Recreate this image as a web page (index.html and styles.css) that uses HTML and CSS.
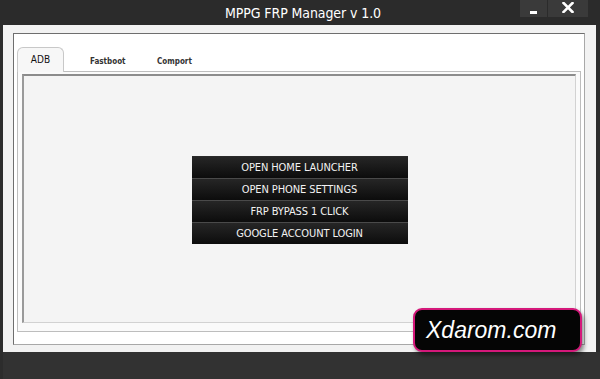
FILE: index.html
```html
<!DOCTYPE html>
<html lang="en">
<head>
  <meta charset="UTF-8" />
  <meta name="viewport" content="width=device-width, initial-scale=1.0"/>
  <title>MPPG FRP Manager v 1.0</title>
  <link rel="stylesheet" href="styles.css">
</head>
<body>

<div class="window">
  <div class="titlebar">
    <span></span>
    <div class="title">MPPG FRP Manager v 1.0</div>
    <div class="controls">
      <div class="ctl min"><span class="bar"></span></div>
      <div class="ctl close">
        <svg width="12" height="11" viewBox="0 0 12 11"><path d="M1.5 1 L10.5 10 M10.5 1 L1.5 10" stroke="#fff" stroke-width="2.6" stroke-linecap="square"/></svg>
      </div>
    </div>
  </div>

  <div class="body">
    <div class="group">
      <div class="tabs">
        <div class="tab active">ADB</div>
        <div class="tab">Fastboot</div>
        <div class="tab">Comport</div>
      </div>
      <div class="frame">
        <div class="page">
          <div class="menu">
            <button>OPEN HOME LAUNCHER</button>
            <button>OPEN PHONE SETTINGS</button>
            <button>FRP BYPASS 1 CLICK</button>
            <button>GOOGLE ACCOUNT LOGIN</button>
          </div>
        </div>
      </div>
    </div>
  </div>

  <div class="statusbar"></div>

  <div class="badge">Xdarom.com</div>
</div>

</body>
</html>
```

FILE: styles.css
```css
* {
  margin: 0; padding: 0;
  box-sizing: border-box;
}
body {
  background: #2b2b2b;
  width: 600px;
  height: 379px;
  overflow: hidden;
  font-family: 'DejaVu Sans Condensed', 'DejaVu Sans', sans-serif;
}
.window {
  position: relative;
  height: 379px;
  display: flex;
  flex-direction: column;
  background: #2c2c2c;
}
.titlebar {
  height: 25px;
  display: grid;
  grid-template-columns: 1fr auto 1fr;
  background: #2b2b2b;
  color: #fff;
}
.title {
  font-size: 14px;
  line-height: 26px;
  letter-spacing: -0.1px;
  padding-left: 6px;
}
.controls {
  justify-self: end;
  display: flex;
  margin-right: 12px;
  height: 17px;
}
.ctl {
  background: #3a3a3a;
  display: flex;
  align-items: center;
  justify-content: center;
}
.ctl.min {
  width: 28px;
  border-right: 1px solid #2b2b2b;
  align-items: flex-end;
  padding-bottom: 3px;
}
.ctl.min .bar {
  width: 7px;
  height: 3px;
  background: #fff;
}
.ctl.close {
  width: 40px;
  align-items: flex-start;
  padding-top: 2px;
}
.body {
  flex: 1;
  margin: 0 4px 0 3px;
  background: #f2f2f2;
  padding: 8px 11px 7px 10px;
  display: flex;
}
.group {
  flex: 1;
  background: #fff;
  border: 1px solid #a8a8a8;
  border-top-color: #6e6e6e;
  border-left-color: #6e6e6e;
  padding: 13px 3px 12px 3px;
  display: flex;
  flex-direction: column;
}
.tabs {
  display: flex;
  height: 24px;
  align-items: flex-end;
}
.tab {
  font-size: 8px;
  font-weight: bold;
  color: #333;
  height: 22px;
  line-height: 26px;
}
.tab.active {
  width: 47px;
  height: 25px;
  margin-bottom: -1px;
  text-align: center;
  font-size: 10px;
  font-weight: normal;
  line-height: 24px;
  color: #111;
  background: #f7f7f7;
  border: 1px solid #c8c8c8;
  border-bottom: none;
  border-radius: 6px 6px 0 0;
  position: relative;
  z-index: 1;
}
.tab:nth-child(2) {
  padding-left: 26px;
  width: 93px;
}
.frame {
  flex: 1;
  border: 1px solid #bdbdbd;
  background: #fafafa;
  padding: 2px 4px 8px 4px;
  display: flex;
}
.page {
  flex: 1;
  background: #f4f4f4;
  border: 1px solid #d2d2d2;
  border-top: 2px solid #8c8c8c;
  border-left: 2px solid #9a9a9a;
  display: flex;
  align-items: center;
  justify-content: center;
}
.menu {
  width: 216px;
  display: flex;
  flex-direction: column;
  margin-top: 1px;
}
.menu button {
  height: 22px;
  border: none;
  border-top: 1px solid #4a4a4a;
  background: linear-gradient(#262626, #0c0c0c);
  color: #f2f2f2;
  font-family: 'DejaVu Sans Condensed', 'DejaVu Sans', sans-serif;
  font-size: 11px;
  letter-spacing: -0.1px;
}
.menu button:first-child {
  border-top-color: #2a2a2a;
}
.statusbar {
  height: 27px;
  background: #323232;
  margin-left: 3px;
}
.badge {
  position: absolute;
  left: 413px;
  top: 308px;
  width: 169px;
  height: 44px;
  background: #050505;
  border: 2px solid #d4187a;
  border-radius: 9px;
  box-shadow: 2px 3px 4px rgba(0,0,0,0.45);
  color: #fff;
  font-family: 'Liberation Sans', Arial, sans-serif;
  font-style: italic;
  font-size: 23px;
  line-height: 40px;
  padding-left: 11px;
}
```
